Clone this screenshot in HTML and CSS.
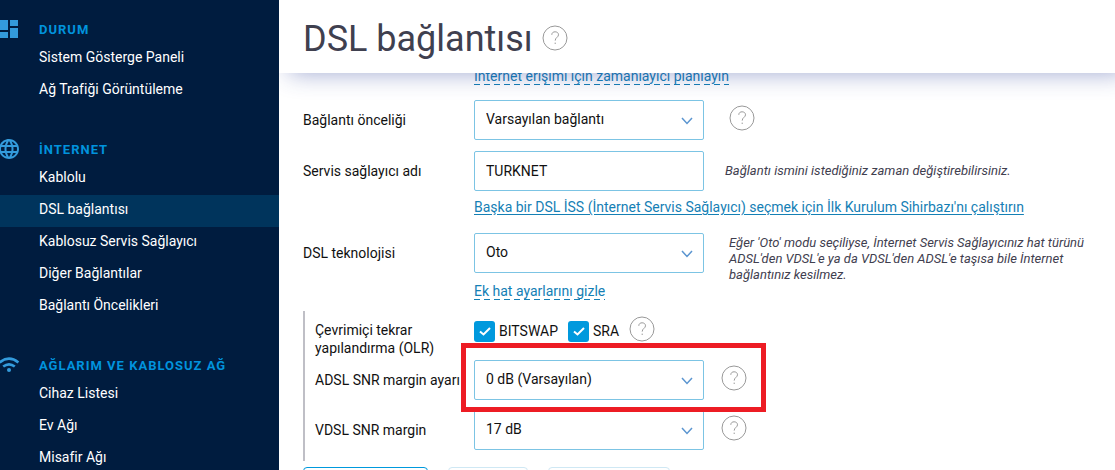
FILE: index.html
```html
<!DOCTYPE html>
<html lang="tr">
<head>
    <meta charset="UTF-8">
    <meta name="viewport" content="width=device-width, initial-scale=1.0">
    <title>DSL bağlantısı</title>
    <link rel="stylesheet" href="styles.css">
</head>
<body>
    <!-- shared icons -->
    <svg class="sprite" aria-hidden="true">
        <symbol id="help" viewBox="0 0 26 26">
            <circle cx="13" cy="13" r="12" />
            <path d="M9.8 9.8C9.8 7.8 11.2 6.8 13.1 6.8S16.5 7.9 16.5 9.8C16.5 12.2 13.2 12.5 13.2 15.6M13.2 17.6V19" />
        </symbol>
        <symbol id="chevron" viewBox="0 0 12 8">
            <path d="M1 1L6 6.5L11 1" />
        </symbol>
    </svg>

    <nav class="sidebar">
        <section class="menu">
            <h2 class="menu-title">
                <svg class="menu-icon" viewBox="0 0 24 24"><path d="M3 13h8V3H3v10zm0 8h8v-6H3v6zm10 0h8V11h-8v10zm0-18v6h8V3h-8z" /></svg>
                DURUM
            </h2>
            <a class="menu-link" href="#">Sistem Gösterge Paneli</a>
            <a class="menu-link" href="#">Ağ Trafiği Görüntüleme</a>
        </section>

        <section class="menu">
            <h2 class="menu-title">
                <svg class="menu-icon" viewBox="0 0 24 24"><path d="M11.99 2C6.47 2 2 6.48 2 12s4.47 10 9.99 10C17.52 22 22 17.52 22 12S17.52 2 11.99 2zm6.93 6h-2.95c-.32-1.25-.78-2.45-1.38-3.56 1.84.63 3.37 1.91 4.33 3.56zM12 4.04c.83 1.2 1.48 2.53 1.91 3.96h-3.82c.43-1.43 1.08-2.76 1.91-3.96zM4.26 14C4.1 13.36 4 12.69 4 12s.1-1.36.26-2h3.38c-.08.66-.14 1.32-.14 2s.06 1.34.14 2H4.26zm.82 2h2.95c.32 1.25.78 2.45 1.38 3.56-1.84-.63-3.37-1.9-4.33-3.56zm2.95-8H5.08c.96-1.66 2.49-2.93 4.33-3.56C8.81 5.55 8.35 6.75 8.03 8zM12 19.96c-.83-1.2-1.48-2.53-1.91-3.96h3.82c-.43 1.43-1.08 2.76-1.91 3.96zM14.34 14H9.66c-.09-.66-.16-1.32-.16-2s.07-1.35.16-2h4.68c.09.65.16 1.32.16 2s-.07 1.34-.16 2zm.25 5.56c.6-1.11 1.06-2.31 1.38-3.56h2.95c-.96 1.65-2.49 2.93-4.33 3.56zM16.36 14c.08-.66.14-1.32.14-2s-.06-1.34-.14-2h3.38c.16.64.26 1.31.26 2s-.1 1.36-.26 2h-3.38z" /></svg>
                İNTERNET
            </h2>
            <a class="menu-link" href="#">Kablolu</a>
            <a class="menu-link active" href="#">DSL bağlantısı</a>
            <a class="menu-link" href="#">Kablosuz Servis Sağlayıcı</a>
            <a class="menu-link" href="#">Diğer Bağlantılar</a>
            <a class="menu-link" href="#">Bağlantı Öncelikleri</a>
        </section>

        <section class="menu">
            <h2 class="menu-title">
                <svg class="menu-icon wifi" viewBox="0 0 24 24">
                    <path d="M2.6 9.4Q12 1.8 21.4 9.4M6.2 13.6Q12 9 17.8 13.6" />
                    <circle cx="12" cy="17" r="2" />
                </svg>
                AĞLARIM VE KABLOSUZ AĞ
            </h2>
            <a class="menu-link" href="#">Cihaz Listesi</a>
            <a class="menu-link" href="#">Ev Ağı</a>
            <a class="menu-link" href="#">Misafir Ağı</a>
        </section>
    </nav>

    <main class="content">
        <header class="page-header">
            <h1>DSL bağlantısı</h1>
            <button class="help" type="button" aria-label="Yardım"><svg><use href="#help" /></svg></button>
        </header>

        <form class="settings">
            <div class="link-row schedule">
                <a class="dashed" href="#">Internet erişimi için zamanlayıcı planlayın</a>
            </div>

            <div class="row">
                <label class="label" for="priority">Bağlantı önceliği</label>
                <div class="field">
                    <div class="select">
                        <select id="priority"><option>Varsayılan bağlantı</option></select>
                        <svg><use href="#chevron" /></svg>
                    </div>
                    <button class="help" type="button" aria-label="Yardım"><svg><use href="#help" /></svg></button>
                </div>
            </div>

            <div class="row">
                <label class="label" for="provider">Servis sağlayıcı adı</label>
                <div class="field near">
                    <input class="text" id="provider" type="text" value="TURKNET">
                    <p class="note">Bağlantı ismini istediğiniz zaman değiştirebilirsiniz.</p>
                </div>
            </div>

            <div class="link-row wizard">
                <a href="#">Başka bir DSL İSS (İnternet Servis Sağlayıcı) seçmek için İlk Kurulum Sihirbazı'nı çalıştırın</a>
            </div>

            <div class="row">
                <label class="label" for="technology">DSL teknolojisi</label>
                <div class="field">
                    <div class="select">
                        <select id="technology"><option>Oto</option></select>
                        <svg><use href="#chevron" /></svg>
                    </div>
                    <p class="note long">Eğer 'Oto' modu seçiliyse, İnternet Servis Sağlayıcınız hat türünü ADSL'den VDSL'e ya da VDSL'den ADSL'e taşısa bile İnternet bağlantınız kesilmez.</p>
                </div>
            </div>

            <div class="link-row extra">
                <a class="dashed" href="#">Ek hat ayarlarını gizle</a>
            </div>

            <div class="group">
                <div class="row checks">
                    <span class="label" id="olr">Çevrimiçi tekrar yapılandırma (OLR)</span>
                    <div class="field" role="group" aria-labelledby="olr">
                        <label class="check"><input type="checkbox" checked>BITSWAP</label>
                        <label class="check"><input type="checkbox" checked>SRA</label>
                        <button class="help" type="button" aria-label="Yardım"><svg><use href="#help" /></svg></button>
                    </div>
                </div>

                <div class="row">
                    <label class="label" for="adsl">ADSL SNR margin ayarı</label>
                    <div class="field marked">
                        <div class="select">
                            <select id="adsl"><option>0 dB (Varsayılan)</option></select>
                            <svg><use href="#chevron" /></svg>
                        </div>
                        <button class="help" type="button" aria-label="Yardım"><svg><use href="#help" /></svg></button>
                    </div>
                </div>

                <div class="row">
                    <label class="label" for="vdsl">VDSL SNR margin</label>
                    <div class="field">
                        <div class="select">
                            <select id="vdsl"><option>17 dB</option></select>
                            <svg><use href="#chevron" /></svg>
                        </div>
                        <button class="help" type="button" aria-label="Yardım"><svg><use href="#help" /></svg></button>
                    </div>
                </div>
            </div>

            <div class="actions">
                <button class="btn primary" type="button" aria-label="Kaydet"></button>
                <button class="btn small" type="button" aria-label="İptal"></button>
                <button class="btn" type="button" aria-label="Sil"></button>
            </div>
        </form>
    </main>
</body>
</html>
```
FILE: styles.css
```css
* {
    margin: 0;
    padding: 0;
    box-sizing: border-box;
}

body {
    display: flex;
    height: 100vh;
    overflow: hidden;
    background-color: #fff;
    color: #111;
    font-family: Roboto, "Liberation Sans", sans-serif;
    font-size: 14px;
    line-height: 18px;
}

button, input, select {
    font: inherit;
    color: inherit;
}

.sprite {
    display: none;
}

/* sidebar */
.sidebar {
    flex: 0 0 279px;
    padding-top: 17px;
    background-color: #001c3f;
    overflow: hidden;
}

.menu {
    margin-bottom: 30px;
}

.menu-title {
    display: flex;
    align-items: flex-start;
    gap: 18px;
    height: 26px;
    color: #0093dd;
    font-size: 13px;
    font-weight: 700;
    line-height: 26px;
    letter-spacing: 1px;
}

.menu-icon {
    width: 24px;
    height: 24px;
    margin-left: -3px;
    fill: #339bdc;
}

.wifi path {
    fill: none;
    stroke: #339bdc;
    stroke-width: 2.6;
}

.menu-link {
    display: block;
    padding: 0 0 4px 39px;
    color: #fff;
    line-height: 28px;
    text-decoration: none;
}

.menu-link.active {
    background-color: #00345c;
}

/* page */
.content {
    position: relative;
    flex: 1;
    min-width: 0;
    overflow: hidden;
}

.page-header {
    position: absolute;
    top: 0;
    left: 0;
    right: 0;
    z-index: 2;
    display: flex;
    align-items: center;
    gap: 9px;
    height: 73px;
    padding: 4px 24px 0;
    background-color: #fff;
    box-shadow: 10px 0 24px rgba(40, 60, 150, 0.45);
}

h1 {
    color: #3f404f;
    font-size: 36px;
    font-weight: 400;
    line-height: 44px;
}

.help {
    flex: none;
    width: 26px;
    height: 26px;
    margin-bottom: 4px;
    border: none;
    background: none;
    cursor: pointer;
}

.page-header .help {
    margin-bottom: 2px;
}

.help svg {
    display: block;
    width: 26px;
    height: 26px;
    fill: none;
    stroke: #999;
}

.settings {
    padding: 67px 16px 0 24px;
}

.row {
    display: flex;
    align-items: center;
    margin-bottom: 11px;
}

.label {
    flex: 0 0 171px;
}

.field {
    display: flex;
    align-items: center;
    gap: 25px;
    height: 40px;
}

.field.near {
    gap: 21px;
}

.select {
    position: relative;
    flex: none;
    width: 230px;
}

.select select,
.text {
    width: 230px;
    height: 40px;
    padding: 0 11px;
    border: 1px solid #7cc4e4;
    border-radius: 2px;
    background-color: #fff;
    appearance: none;
}

.select select {
    padding-bottom: 2px;
}

.select svg {
    position: absolute;
    top: 17px;
    right: 11px;
    width: 12px;
    height: 8px;
    fill: none;
    stroke: #5b95d0;
    stroke-width: 1.5;
    pointer-events: none;
}

.note {
    max-width: 372px;
    color: #3f404f;
    font-size: 13px;
    font-style: italic;
    line-height: 16px;
}

.note.long {
    padding-top: 12px;
}

.link-row {
    padding-left: 171px;
}

.link-row.schedule {
    margin-bottom: 15px;
}

.link-row.wizard {
    margin: -4px 0 17px;
}

.link-row.extra {
    margin: -2px 0 11px;
}

.link-row a {
    display: inline-block;
    color: #1580b5;
    text-underline-offset: 2px;
}

.link-row .dashed {
    background: repeating-linear-gradient(90deg, #1580b5 0 6px, transparent 6px 10px) left bottom / 100% 1px no-repeat;
    text-decoration: none;
}

/* line settings */
.group {
    padding: 10px 0 1px 10px;
    border-left: 2px solid #bfbfc6;
}

.group .row {
    margin-bottom: 10px;
}

.group .label {
    flex-basis: 159px;
}

.group .field {
    gap: 17px;
}

.group .checks {
    align-items: flex-start;
    margin-bottom: 3px;
}

.group .checks .field {
    gap: 10px;
    height: 20px;
}

.check {
    display: flex;
    align-items: center;
    gap: 4px;
}

.check input {
    width: 21px;
    height: 21px;
    border-radius: 3px;
    background: #0099dd url("data:image/svg+xml,%3Csvg xmlns='http://www.w3.org/2000/svg' viewBox='0 0 21 21'%3E%3Cpath d='M6 10.5L9.5 13.5L16 7' fill='none' stroke='white' stroke-width='2'/%3E%3C/svg%3E");
    appearance: none;
}

/* red frame over the highlighted setting */
.marked {
    position: relative;
}

.marked::after {
    content: "";
    position: absolute;
    inset: -17px -19px -12px -13px;
    z-index: 1;
    border: 5px solid #ed1c24;
    pointer-events: none;
}

.actions {
    display: flex;
    gap: 20px;
    margin-top: 6px;
}

.btn {
    width: 122px;
    height: 40px;
    border: 1px solid #cfe8f4;
    border-radius: 4px;
    background-color: #fff;
    color: #0099dd;
}

.btn.primary {
    width: 125px;
    border-color: #0099dd;
}

.btn.small {
    width: 80px;
}
```
